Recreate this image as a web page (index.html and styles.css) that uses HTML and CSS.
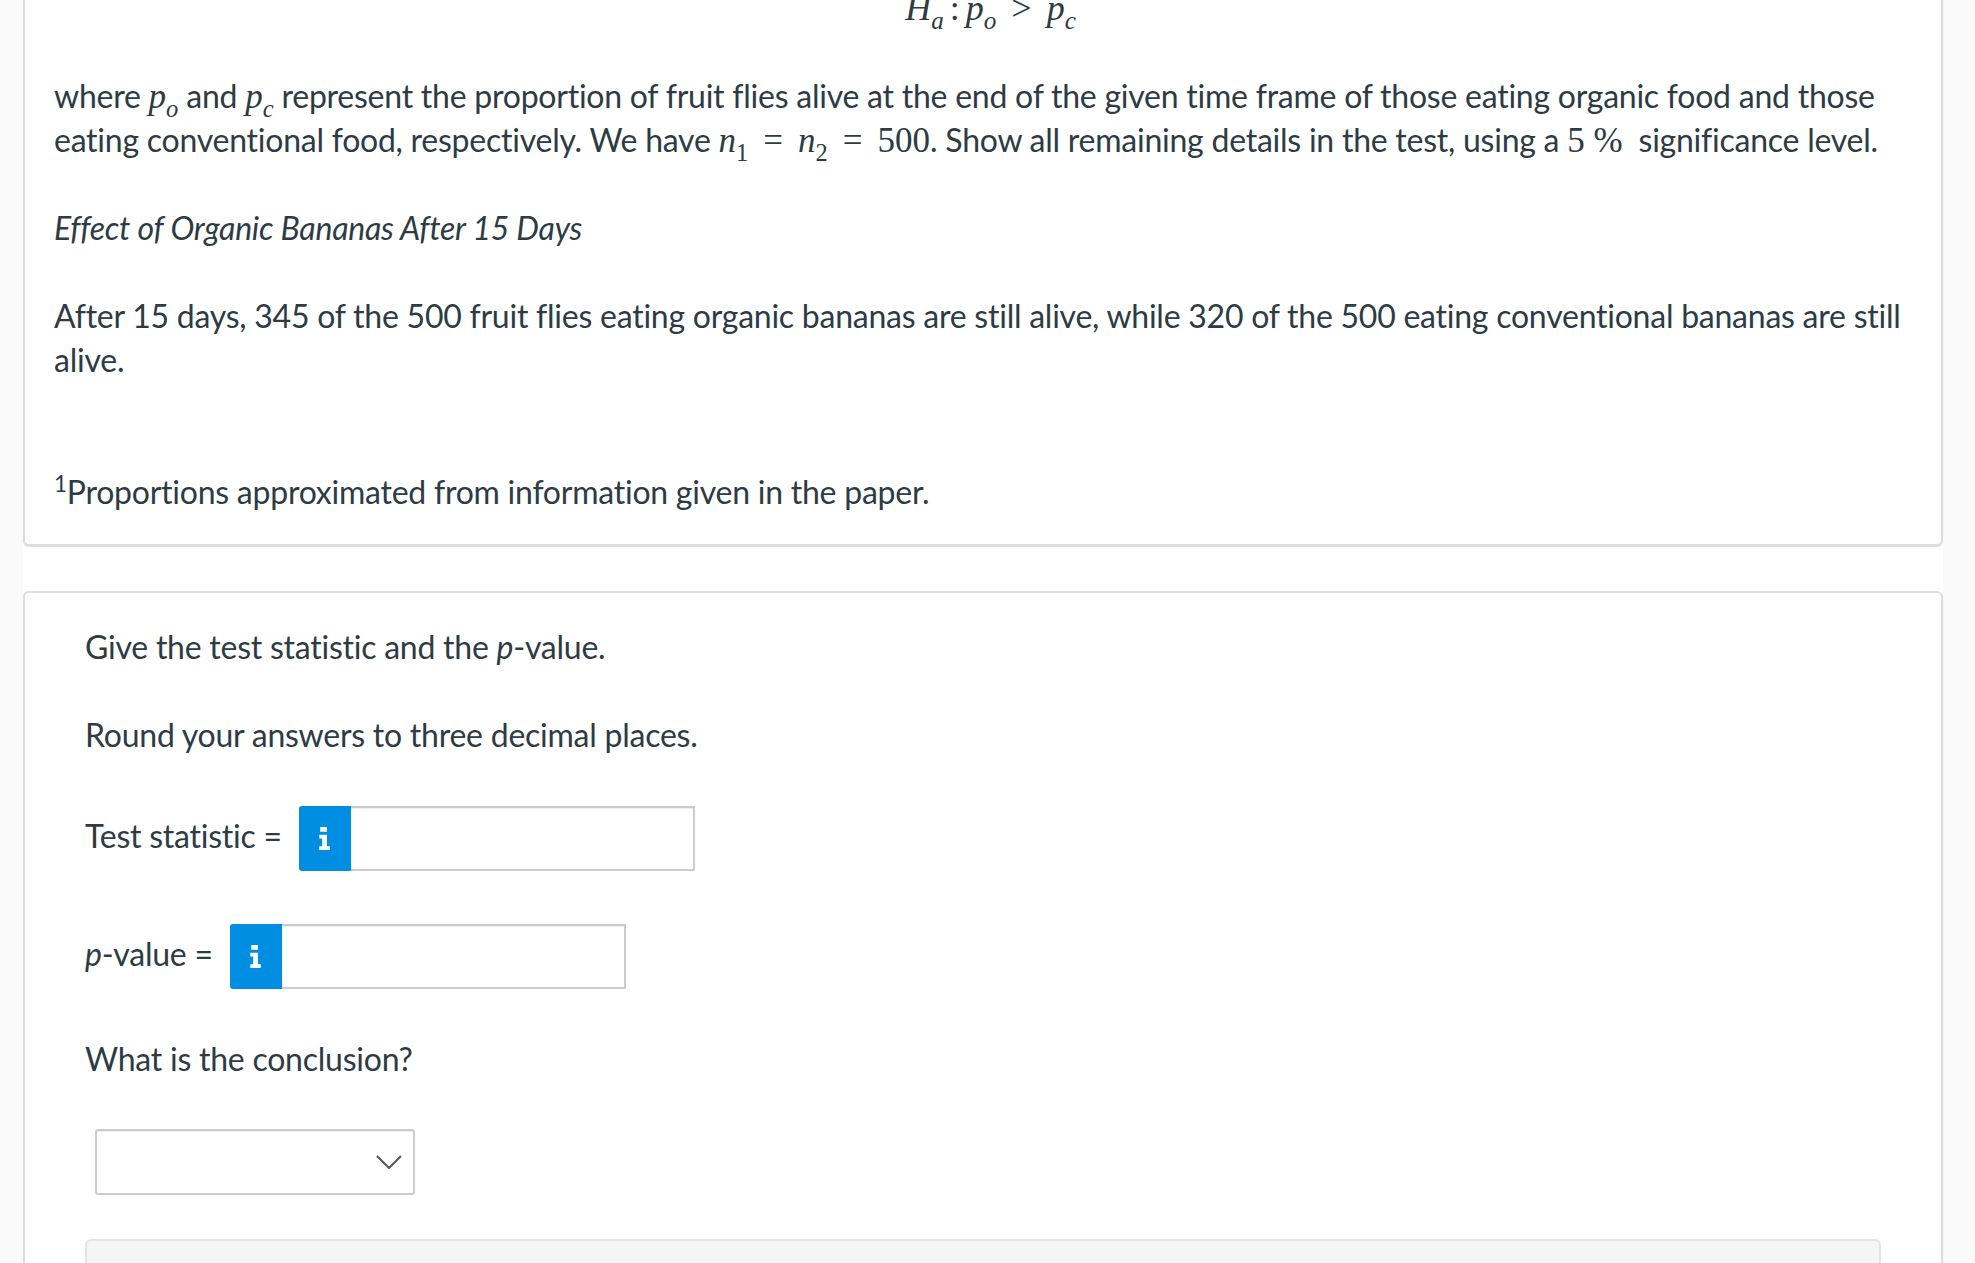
FILE: index.html
```html
<!DOCTYPE html>
<html lang="en">
<head>
    <meta charset="UTF-8">
    <title>Hypothesis Test</title>
    <link rel="stylesheet" href="styles.css">
</head>
<body>

<div class="content">
    <div class="card card-top">
        <p class="equation"><i>H<sub>a</sub></i><span class="colon">:</span><i>p<sub>o</sub></i><span class="rel">&gt;</span><i>p<sub>c</sub></i></p>

        <p>where <i class="m">p<sub>o</sub></i> and <i class="m">p<sub>c</sub></i> represent the proportion of fruit flies alive at the end of the given time frame of those eating organic food and those eating conventional food, respectively. We have <span class="m"><i>n</i><sub>1</sub><span class="rel">=</span><i>n</i><sub>2</sub><span class="rel">=</span>500</span>. Show all remaining details in the test, using a <span class="m">5 %</span>&nbsp; significance level.</p>

        <p><em>Effect of Organic Bananas After 15 Days</em></p>

        <p>After 15 days, 345 of the 500 fruit flies eating organic bananas are still alive, while 320 of the 500 eating conventional bananas are still alive.</p>

        <p class="footnote"><sup>1</sup>Proportions approximated from information given in the paper.</p>
    </div>

    <div class="card card-question">
        <p>Give the test statistic and the <em>p</em>-value.</p>

        <p>Round your answers to three decimal places.</p>

        <div class="answer-row">
            <label>Test statistic =</label>
            <div class="answer-input">
                <span class="info-btn">
                    <svg viewBox="0 0 12 24" width="12" height="23"><path d="M1 0h7v5H1zM0 8h8v12h3v4H0v-4h3v-8H0z" fill="#fff"/></svg>
                </span>
                <input type="text">
            </div>
        </div>

        <div class="answer-row">
            <label><em>p</em>-value =</label>
            <div class="answer-input">
                <span class="info-btn">
                    <svg viewBox="0 0 12 24" width="12" height="23"><path d="M1 0h7v5H1zM0 8h8v12h3v4H0v-4h3v-8H0z" fill="#fff"/></svg>
                </span>
                <input type="text">
            </div>
        </div>

        <p class="conclusion">What is the conclusion?</p>

        <div class="dropdown">
            <svg viewBox="0 0 26 14" width="26" height="14"><path d="M1 1l12 12L25 1" fill="none" stroke="#555" stroke-width="2"/></svg>
        </div>

        <div class="hint-box"></div>
    </div>
</div>

</body>
</html>
```

FILE: styles.css
```css
html, body {
    height: 1263px;
    overflow: hidden;
}
body {
    margin: 0;
    background-color: #fafafa;
    font-family: "Lato", sans-serif;
    font-size: 32px;
    line-height: 44px;
    letter-spacing: -0.24px;
    color: #2d3b45;
}
.content {
    margin: -14px 32px 0 23px;
    background-color: white;
}
.card {
    border: 2px solid #ddd;
    border-radius: 6px;
    box-shadow: 0 1px 1px #ddd;
    background-color: white;
}
.card-top {
    border-top: none;
    border-top-left-radius: 0;
    border-top-right-radius: 0;
    padding: 0 14px 30px 29px;
    margin-bottom: 45px;
}
.card-question {
    padding: 32px 60px 200px 60px;
}
p {
    margin: 0 0 44px 0;
}
.m, .equation {
    font-family: "Liberation Serif", serif;
    font-size: 35px;
    letter-spacing: 0;
    line-height: 0;
}
.equation {
    text-align: center;
    font-size: 36px;
    line-height: 44px;
}
sub {
    font-size: 70%;
    line-height: 0;
    vertical-align: -0.35em;
}
sup {
    font-size: 70%;
    line-height: 0;
}
.rel {
    font-style: normal;
    margin: 0 15px;
}
.colon {
    margin: 0 6px;
}
.footnote {
    margin: 88px 0 0 0;
}
.answer-row {
    display: flex;
    align-items: center;
    gap: 17px;
    margin-bottom: 53px;
}
.answer-row label {
    margin-bottom: 6px;
}
.answer-input {
    display: flex;
    width: 396px;
    height: 65px;
}
.answer-row:first-of-type {
    margin-top: 49px;
}
.info-btn {
    display: flex;
    align-items: center;
    justify-content: center;
    width: 52px;
    flex-shrink: 0;
    background-color: #008ee2;
    border-radius: 3px 0 0 3px;
}
.answer-input input {
    flex: 1;
    min-width: 0;
    border: 2px solid #ccc;
    border-left: none;
    box-shadow: inset 0 1px 1px rgba(0, 0, 0, 0.075);
    padding: 0;
    background-color: white;
}
.conclusion {
    margin-top: -5px;
    margin-bottom: 48px;
}
.dropdown {
    display: flex;
    align-items: center;
    justify-content: flex-end;
    box-sizing: border-box;
    width: 320px;
    height: 66px;
    margin-left: 10px;
    padding-right: 11px;
    border: 2px solid #ccc;
    border-radius: 3px;
    box-shadow: inset 0 1px 1px rgba(0, 0, 0, 0.075);
}
.hint-box {
    height: 100px;
    margin-top: 44px;
    background-color: #f5f5f5;
    border: 2px solid #e3e3e3;
    border-radius: 6px;
}
```
